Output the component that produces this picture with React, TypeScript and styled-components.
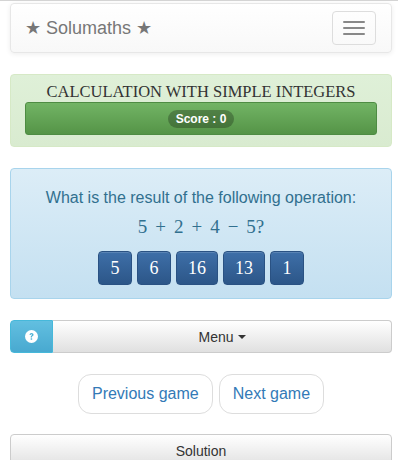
import React from 'react';
import styled, { createGlobalStyle } from 'styled-components';

const GlobalStyle = createGlobalStyle`
  *, *::before, *::after {
    box-sizing: border-box;
  }
  html, body {
    margin: 0;
    padding: 0;
    background: #fff;
  }
  body {
    border-top: 1px solid #d4d4d4;
    font-family: 'Liberation Sans', Arial, sans-serif;
    font-size: 14px;
    color: #333;
  }
`;

const answers = [5, 6, 16, 13, 1];

const App = () => {
  return (
    <>
      <GlobalStyle />
      <Page>
        <Navbar>
          <Brand>★ Solumaths ★</Brand>
          <Toggle aria-label='menu'>
            <Bar />
            <Bar />
            <Bar />
          </Toggle>
        </Navbar>

        <TitlePanel>
          <Title>CALCULATION WITH SIMPLE INTEGERS</Title>
          <ScoreBar>
            <Badge>Score : 0</Badge>
          </ScoreBar>
        </TitlePanel>

        <QuestionPanel>
          <Question>What is the result of the following operation:</Question>
          <Expression>
            5<Op>+</Op>2<Op>+</Op>4<Op>−</Op>5?
          </Expression>
          <Answers>
            {answers.map((a) => (
              <AnswerButton key={a}>{a}</AnswerButton>
            ))}
          </Answers>
        </QuestionPanel>

        <MenuGroup>
          <HelpButton aria-label='help'>
            <svg width='13' height='13' viewBox='0 0 16 16'>
              <circle cx='8' cy='8' r='8' fill='#fff' />
              <path
                d='M5.6 6.1c0-1.5 1.1-2.4 2.5-2.4s2.4.9 2.4 2.1c0 1-.6 1.5-1.3 1.9-.5.3-.6.5-.6 1v.4H7v-.6c0-.9.4-1.3 1-1.7.5-.3.7-.5.7-.9 0-.5-.4-.8-.8-.8-.5 0-.8.4-.9.9H5.6z'
                fill='#4fb3d6'
              />
              <rect x='7' y='10.2' width='1.8' height='1.8' fill='#4fb3d6' />
            </svg>
          </HelpButton>
          <MenuButton>
            Menu <Caret />
          </MenuButton>
        </MenuGroup>

        <GameLinks>
          <GameLink>Previous game</GameLink>
          <GameLink>Next game</GameLink>
        </GameLinks>

        <SolutionButton>Solution</SolutionButton>
      </Page>
    </>
  );
};

const Page = styled.div`
  padding: 2px 6px 0 10px;
  display: flex;
  flex-direction: column;
  gap: 21px;
`;

const Navbar = styled.nav`
  height: 50px;
  border: 1px solid #e7e7e7;
  border-radius: 4px;
  background: linear-gradient(to bottom, #ffffff 0%, #f8f8f8 100%);
  box-shadow: 0 1px 5px rgba(0, 0, 0, 0.075);
  display: flex;
  align-items: center;
  justify-content: space-between;
  padding: 0 15px 0 14px;
`;

const Brand = styled.span`
  font-size: 18px;
  color: #777;
  line-height: 20px;
`;

const Toggle = styled.button`
  width: 44px;
  height: 34px;
  border: 1px solid #ddd;
  border-radius: 4px;
  background: transparent;
  display: flex;
  flex-direction: column;
  align-items: center;
  justify-content: center;
  gap: 4px;
  padding: 0;
`;

const Bar = styled.span`
  display: block;
  width: 22px;
  height: 2px;
  border-radius: 1px;
  background: #888;
`;

const TitlePanel = styled.div`
  height: 73px;
  border: 1px solid #d6e9c6;
  border-radius: 4px;
  background: linear-gradient(to bottom, #dff0d8 0%, #d9ebd0 100%);
  padding: 7px 14px 0;
  display: flex;
  flex-direction: column;
  align-items: stretch;
`;

const Title = styled.h1`
  margin: 0;
  font-family: 'Liberation Serif', 'Times New Roman', serif;
  font-weight: normal;
  font-size: 16.5px;
  line-height: 20px;
  color: #333;
  text-align: center;
`;

const ScoreBar = styled.div`
  height: 33px;
  border: 1px solid #4e8c43;
  border-radius: 3px;
  background: linear-gradient(to bottom, #72b465 0%, #559447 100%);
  display: flex;
  align-items: center;
  justify-content: center;
`;

const Badge = styled.span`
  background: rgba(0, 0, 0, 0.25);
  color: #fff;
  font-weight: bold;
  font-size: 12px;
  line-height: 18px;
  padding: 0 8px;
  border-radius: 10px;
`;

const QuestionPanel = styled.div`
  height: 131px;
  border: 1px solid #a8d4ec;
  border-radius: 4px;
  background: linear-gradient(to bottom, #dcedf7 0%, #c4e0f1 100%);
  display: flex;
  flex-direction: column;
  align-items: center;
  padding-top: 19px;
  color: #31708f;
`;

const Question = styled.div`
  font-size: 16px;
  line-height: 20px;
`;

const Expression = styled.div`
  margin-top: 8px;
  font-family: 'Liberation Serif', 'Times New Roman', serif;
  font-size: 19px;
  line-height: 22px;
`;

const Op = styled.span`
  padding: 0 8px;
`;

const Answers = styled.div`
  margin-top: 13px;
  display: flex;
  gap: 5px;
`;

const AnswerButton = styled.button`
  height: 34px;
  padding: 0 11px;
  min-width: 34px;
  border: 1px solid #2a5283;
  border-radius: 4px;
  background: linear-gradient(to bottom, #3e6fa8 0%, #2c5688 100%);
  color: #fff;
  font-family: 'Liberation Serif', 'Times New Roman', serif;
  font-size: 18px;
  box-shadow: inset 0 1px 0 rgba(255, 255, 255, 0.15);
`;

const MenuGroup = styled.div`
  display: flex;
  height: 33px;
`;

const HelpButton = styled.button`
  width: 43px;
  flex: none;
  border: 1px solid #46b8da;
  border-radius: 4px 0 0 4px;
  background: linear-gradient(to bottom, #62bfe0 0%, #48a9d0 100%);
  display: flex;
  align-items: center;
  justify-content: center;
  padding: 0;
`;

const MenuButton = styled.button`
  flex: 1;
  border: 1px solid #ccc;
  border-left: none;
  border-radius: 0 4px 4px 0;
  background: linear-gradient(to bottom, #ffffff 0%, #e0e0e0 100%);
  font-family: 'Liberation Sans', Arial, sans-serif;
  font-size: 14px;
  color: #333;
  display: flex;
  align-items: center;
  justify-content: center;
  gap: 4px;
  padding: 0;
`;

const Caret = styled.span`
  display: inline-block;
  width: 0;
  height: 0;
  border-top: 4px solid #333;
  border-left: 4px solid transparent;
  border-right: 4px solid transparent;
`;

const GameLinks = styled.div`
  display: flex;
  justify-content: center;
  gap: 6px;
`;

const GameLink = styled.a`
  height: 40px;
  padding: 0 13px;
  border: 1px solid #ddd;
  border-radius: 13px;
  color: #337ab7;
  font-size: 16px;
  display: flex;
  align-items: center;
  cursor: pointer;
`;

const SolutionButton = styled.button`
  margin-top: -1px;
  height: 34px;
  border: 1px solid #ccc;
  border-radius: 4px;
  background: linear-gradient(to bottom, #ffffff 0%, #e0e0e0 100%);
  font-family: 'Liberation Sans', Arial, sans-serif;
  font-size: 14px;
  color: #333;
  padding: 0;
`;

export default App;
